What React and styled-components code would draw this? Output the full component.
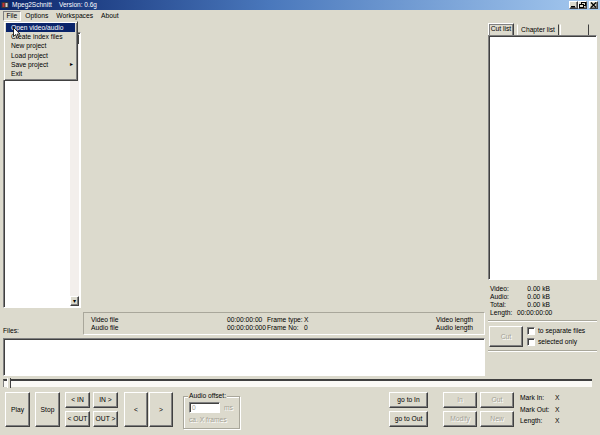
import styled, { createGlobalStyle, css } from "styled-components";

const GlobalStyle = createGlobalStyle`
  html, body { margin: 0; padding: 0; background: #dcdacd; }
  body { font-family: "Liberation Sans", Arial, sans-serif; }
`;

const raised = css`
  border: 1px solid;
  border-color: #fff #404040 #404040 #fff;
  box-shadow: inset -1px -1px 0 #808080;
`;

const sunken = css`
  border: 1px solid;
  border-color: #808080 #fff #fff #808080;
  box-shadow: inset 1px 1px 0 #404040;
`;

const etched = css`
  color: #a3a195;
  text-shadow: 1px 1px 0 #fff;
`;

const App = () => (
  <>
    <GlobalStyle />
    <Window>
      <TitleBar>
        <AppIcon viewBox="0 0 8 8">
          <rect x="0.5" y="1" width="7" height="6" fill="#3a3a3a" />
          <rect x="1.5" y="2" width="2" height="4" fill="#c83030" />
          <rect x="4.5" y="2" width="2" height="4" fill="#d0d0d0" />
        </AppIcon>
        <TitleText>Mpeg2Schnitt    Version: 0.6g</TitleText>
        <WinButtons>
          <WinButton>
            <svg width="7" height="6" viewBox="0 0 7 6">
              <rect x="1" y="4" width="4" height="1.5" fill="#000" />
            </svg>
          </WinButton>
          <WinButton>
            <svg width="7" height="6" viewBox="0 0 7 6">
              <rect x="2.5" y="0.5" width="4" height="3" fill="none" stroke="#000" />
              <rect x="0.5" y="2.5" width="4" height="3" fill="#dcdacd" stroke="#000" />
            </svg>
          </WinButton>
          <WinButton $gap>
            <svg width="7" height="6" viewBox="0 0 7 6">
              <path d="M1 0.5 L6 5.5 M6 0.5 L1 5.5" stroke="#000" strokeWidth="1.3" />
            </svg>
          </WinButton>
        </WinButtons>
      </TitleBar>

      <MenuBar>
        <MenuItem $active>File</MenuItem>
        <MenuItem>Options</MenuItem>
        <MenuItem>Workspaces</MenuItem>
        <MenuItem>About</MenuItem>
      </MenuBar>

      <Workspace>
        <MainCol>
          <TopRow>
            <ListBox>
              <ListArea />
              <ScrollBar>
                <ScrollButton>▴</ScrollButton>
                <ScrollTrack />
                <ScrollButton>▾</ScrollButton>
              </ScrollBar>
            </ListBox>
            <VideoArea />
          </TopRow>
          <MidRow>
            <FilesLabel>Files:</FilesLabel>
            <InfoPanel>
              <span>Video file</span>
              <span>00:00:00:00</span>
              <span>Frame type:</span>
              <span>X</span>
              <RightText>Video length</RightText>
              <span>Audio file</span>
              <span>00:00:00:000</span>
              <span>Frame No:</span>
              <span>0</span>
              <RightText>Audio length</RightText>
            </InfoPanel>
          </MidRow>
          <FilesList />
        </MainCol>

        <SideCol>
          <Tabs>
            <Tab $selected $w={26}>Cut list</Tab>
            <Tab $w={42}>Chapter list</Tab>
            <Tab $w={29} />
          </Tabs>
          <TabPanel />
          <Stats>
            <span>Video:</span>
            <RightText>0.00 kB</RightText>
            <span>Audio:</span>
            <RightText>0.00 kB</RightText>
            <span>Total:</span>
            <RightText>0.00 kB</RightText>
            <span>Length:</span>
            <RightText>00:00:00:00</RightText>
          </Stats>
          <Separator />
          <CutRow>
            <Button $disabled $w={34} $h={21}>Cut</Button>
            <Checks>
              <CheckLine>
                <CheckBox />
                to separate files
              </CheckLine>
              <CheckLine>
                <CheckBox />
                selected only
              </CheckLine>
            </Checks>
          </CutRow>
          <Separator />
        </SideCol>
      </Workspace>

      <SliderRow>
        <Track>
          <Thumb />
        </Track>
      </SliderRow>

      <ControlRow>
        <Button $w={25} $h={35}>Play</Button>
        <Button $w={25} $h={35} $ml={5}>Stop</Button>
        <ButtonGrid $ml={5} $col={25} $cols={2}>
          <Button $h={16}>&lt; IN</Button>
          <Button $h={16}>IN &gt;</Button>
          <Button $h={16}>&lt; OUT</Button>
          <Button $h={16}>OUT &gt;</Button>
        </ButtonGrid>
        <Button $w={24} $h={35} $ml={6}>&lt;</Button>
        <Button $w={24} $h={35} $ml={1}>&gt;</Button>
        <AudioGroup>
          <Legend>Audio offset:</Legend>
          <OffsetLine>
            <OffsetInput>0</OffsetInput>
            <Muted>ms</Muted>
          </OffsetLine>
          <Muted>ca. X frames</Muted>
        </AudioGroup>
        <ButtonGrid $ml={149} $col={39} $cols={1}>
          <Button $h={16}>go to In</Button>
          <Button $h={16}>go to Out</Button>
        </ButtonGrid>
        <ButtonGrid $ml={15} $col={34} $cols={2}>
          <Button $h={16} $disabled>In</Button>
          <Button $h={16} $disabled>Out</Button>
          <Button $h={16} $disabled>Modify</Button>
          <Button $h={16} $disabled>New</Button>
        </ButtonGrid>
        <MarkInfo>
          <span>Mark In:</span>
          <span>X</span>
          <span>Mark Out:</span>
          <span>X</span>
          <span>Length:</span>
          <span>X</span>
        </MarkInfo>
      </ControlRow>

      <DropMenu>
        <DropItem $hot>Open video/audio</DropItem>
        <DropItem>Create index files</DropItem>
        <DropItem>New project</DropItem>
        <DropItem>Load project</DropItem>
        <DropItem>
          Save project
          <SubArrow>▸</SubArrow>
        </DropItem>
        <DropItem>Exit</DropItem>
      </DropMenu>

      <Cursor viewBox="0 0 8 12">
        <path d="M0.5 0.5 L0.5 9.5 L2.6 7.6 L4.2 11.2 L5.6 10.6 L4.1 7.1 L7 7.1 Z" fill="#fff" stroke="#000" strokeWidth="0.8" />
      </Cursor>
    </Window>
  </>
);

const Window = styled.div`
  position: relative;
  width: 600px;
  height: 435px;
  overflow: hidden;
  display: flex;
  flex-direction: column;
  background: #dcdacd;
  font-size: 6.7px;
  line-height: 8px;
  color: #000;
`;

const TitleBar = styled.div`
  height: 10px;
  display: flex;
  align-items: center;
  background: linear-gradient(90deg, #0a246a 0%, #4a78bc 45%, #a6caf0 100%);
`;

const AppIcon = styled.svg`
  width: 8px;
  height: 8px;
  margin-left: 1px;
`;

const TitleText = styled.span`
  color: #fff;
  margin-left: 3px;
  white-space: pre;
  font-size: 6.5px;
`;

const WinButtons = styled.div`
  margin-left: auto;
  margin-right: 2px;
  display: flex;
`;

const WinButton = styled.div`
  ${raised};
  box-sizing: border-box;
  width: 9px;
  height: 8px;
  background: #dcdacd;
  display: flex;
  align-items: center;
  justify-content: center;
  margin-left: ${(p) => (p.$gap ? "2px" : "0")};
`;

const MenuBar = styled.div`
  height: 11px;
  display: flex;
  align-items: center;
  padding-left: 3px;
`;

const MenuItem = styled.div`
  box-sizing: border-box;
  height: 10px;
  line-height: 8px;
  padding: 0 2.5px;
  margin-right: 1px;
  border: 1px solid ${(p) => (p.$active ? "#808080" : "transparent")};
  border-right-color: ${(p) => (p.$active ? "#fff" : "transparent")};
  border-bottom-color: ${(p) => (p.$active ? "#fff" : "transparent")};
`;

const Workspace = styled.div`
  height: 356px;
  display: flex;
  padding: 1px 3px 0 3px;
  box-sizing: border-box;
`;

const MainCol = styled.div`
  width: 482px;
  display: flex;
  flex-direction: column;
`;

const TopRow = styled.div`
  height: 290px;
  display: flex;
`;

const ListBox = styled.div`
  ${sunken};
  box-sizing: border-box;
  width: 78px;
  height: 276px;
  margin-top: 10px;
  background: #fff;
  display: flex;
  padding: 1px;
`;

const ListArea = styled.div`
  flex: 1;
`;

const ScrollBar = styled.div`
  width: 9px;
  display: flex;
  flex-direction: column;
`;

const ScrollButton = styled.div`
  ${raised};
  box-sizing: border-box;
  height: 10px;
  background: #dcdacd;
  font-size: 6px;
  line-height: 8px;
  text-align: center;
  color: #000;
`;

const ScrollTrack = styled.div`
  flex: 1;
  background: #f3efec;
`;

const VideoArea = styled.div`
  flex: 1;
  margin-left: 4px;
`;

const MidRow = styled.div`
  height: 26px;
  display: flex;
`;

const FilesLabel = styled.div`
  width: 80px;
  align-self: flex-end;
  padding-bottom: 3px;
`;

const InfoPanel = styled.div`
  flex: 1;
  box-sizing: border-box;
  margin-bottom: 3px;
  border: 1px solid;
  border-color: #a9a79b #fff #fff #a9a79b;
  padding: 3px 11px 0 7px;
  display: grid;
  grid-template-columns: 136px 40px 37px 1fr auto;
  grid-auto-rows: 8px;
  white-space: nowrap;
`;

const RightText = styled.span`
  text-align: right;
`;

const FilesList = styled.div`
  ${sunken};
  box-sizing: border-box;
  height: 38px;
  background: #fff;
`;

const SideCol = styled.div`
  width: 109px;
  margin-left: 3px;
  display: flex;
  flex-direction: column;
`;

const Tabs = styled.div`
  height: 13px;
  display: flex;
  align-items: flex-end;
`;

const Tab = styled.div`
  box-sizing: border-box;
  width: ${(p) => p.$w}px;
  height: ${(p) => (p.$selected ? 12 : 11)}px;
  margin-right: ${(p) => (p.$selected ? 3 : 1)}px;
  border: 1px solid;
  border-color: ${(p) => (p.$selected ? "#fff" : "transparent")} #404040 transparent #fff;
  border-bottom: 0;
  text-align: center;
  line-height: 10px;
  white-space: nowrap;
  ${(p) => p.$selected && css`box-shadow: inset -1px 0 0 #808080, inset 1px 1px 0 #808080;`}
`;

const TabPanel = styled.div`
  ${sunken};
  box-sizing: border-box;
  height: 245px;
  background: #fff;
`;

const Stats = styled.div`
  margin-top: 5px;
  padding-left: 2px;
  display: grid;
  grid-template-columns: 27px 33px;
  grid-auto-rows: 8px;
  white-space: nowrap;
`;

const Separator = styled.div`
  margin: 3px 0 4px;
  border-top: 1px solid #a9a79b;
  border-bottom: 1px solid #fff;
`;

const CutRow = styled.div`
  display: flex;
  gap: 4px;
  padding-left: 1px;
  align-items: flex-start;
`;

const Checks = styled.div`
  display: flex;
  flex-direction: column;
  gap: 3px;
  padding-top: 1px;
`;

const CheckLine = styled.div`
  display: flex;
  align-items: center;
  gap: 3px;
  white-space: nowrap;
  height: 8px;
`;

const CheckBox = styled.div`
  ${sunken};
  box-sizing: border-box;
  width: 8px;
  height: 8px;
  background: #fff;
`;

const Button = styled.div`
  ${raised};
  box-sizing: border-box;
  width: ${(p) => (p.$w ? `${p.$w}px` : "auto")};
  height: ${(p) => p.$h}px;
  margin-left: ${(p) => p.$ml || 0}px;
  flex-shrink: 0;
  background: #dcdacd;
  display: flex;
  align-items: center;
  justify-content: center;
  white-space: nowrap;
  ${(p) => p.$disabled && etched};
`;

const SliderRow = styled.div`
  height: 13px;
  box-sizing: border-box;
  padding: 2px 8px 0 3px;
`;

const Track = styled.div`
  position: relative;
  height: 8px;
  box-sizing: border-box;
  background: #fbfaf6;
  border-top: 2px solid #404040;
  border-left: 1px solid #808080;
`;

const Thumb = styled.div`
  position: absolute;
  left: 3px;
  top: -3px;
  width: 2px;
  height: 10px;
  background: #dcdacd;
  border-left: 1px solid #fff;
  border-right: 1px solid #404040;
`;

const ControlRow = styled.div`
  flex: 1;
  display: flex;
  align-items: flex-start;
  padding: 2px 0 0 5px;
`;

const ButtonGrid = styled.div`
  margin-left: ${(p) => p.$ml}px;
  display: grid;
  grid-template-columns: repeat(${(p) => p.$cols}, ${(p) => p.$col}px);
  gap: 3px;
`;

const AudioGroup = styled.div`
  margin: 4px 0 0 10px;
  width: 57px;
  height: 33px;
  box-sizing: border-box;
  padding: 0 0 0 5px;
  border: 1px solid #a9a79b;
  box-shadow: inset 1px 1px 0 #fff, 1px 1px 0 #fff;
  display: flex;
  flex-direction: column;
  align-items: flex-start;
`;

const Legend = styled.span`
  margin: -5px 0 0 -1px;
  padding: 0 1px;
  background: #dcdacd;
  white-space: nowrap;
`;

const OffsetLine = styled.div`
  display: flex;
  align-items: center;
  gap: 4px;
  margin: 2px 0 3px;
`;

const OffsetInput = styled.div`
  ${sunken};
  box-sizing: border-box;
  width: 31px;
  height: 11px;
  background: #fff;
  padding-left: 2px;
  line-height: 9px;
  color: #a3a195;
`;

const Muted = styled.span`
  ${etched};
  white-space: nowrap;
`;

const MarkInfo = styled.div`
  margin-left: 6px;
  padding-top: 2px;
  display: grid;
  grid-template-columns: 35px auto;
  grid-auto-rows: 11.5px;
  white-space: nowrap;
`;

const DropMenu = styled.div`
  position: absolute;
  left: 3px;
  top: 21px;
  width: 75px;
  box-sizing: border-box;
  background: #dcdacd;
  border: 1px solid;
  border-color: #dcdacd #404040 #404040 #dcdacd;
  box-shadow: inset 1px 1px 0 #fff, inset -1px -1px 0 #808080;
  padding: 1px 2px 2px;
`;

const DropItem = styled.div`
  position: relative;
  height: 9.2px;
  line-height: 9px;
  padding-left: 5px;
  white-space: nowrap;
  background: ${(p) => (p.$hot ? "#0a246a" : "transparent")};
  color: ${(p) => (p.$hot ? "#fff" : "#000")};
`;

const SubArrow = styled.span`
  position: absolute;
  right: 2px;
  top: 0;
  font-size: 6px;
`;

const Cursor = styled.svg`
  position: absolute;
  left: 13px;
  top: 27px;
  width: 8px;
  height: 12px;
`;

export default App;
